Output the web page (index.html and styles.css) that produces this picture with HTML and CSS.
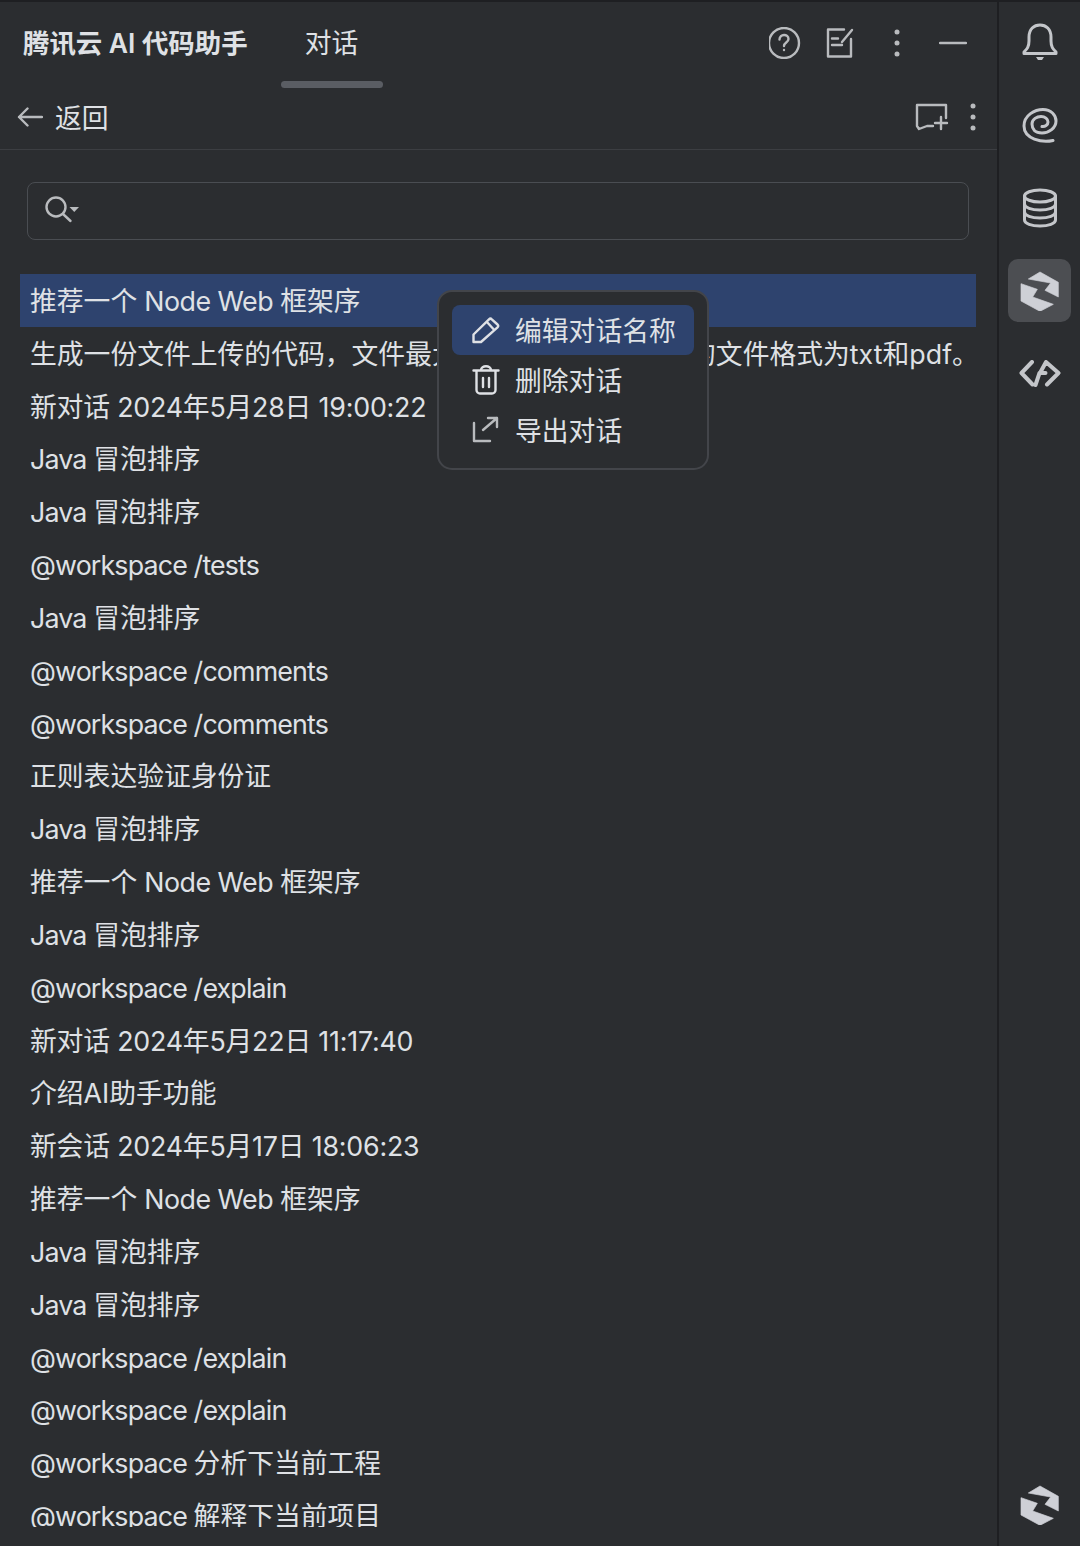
FILE: index.html
```html
<!DOCTYPE html>
<html lang="zh-CN">
<head>
    <meta charset="UTF-8">
    <title>腾讯云 AI 代码助手</title>
    <link rel="stylesheet" href="styles.css">
</head>
<body>
    <div class="window">
        <div class="panel">
            <header class="title-bar">
                <h1 class="title">腾讯云 AI 代码助手</h1>
                <div class="tab">对话</div>
                <div class="title-actions">
                    <span class="action">
                        <svg width="32" height="32" viewBox="0 0 32 32" class="line-icon"><circle cx="15" cy="16" r="15"/><path d="M10.500 12.500c0-6 9-6 9-.5 0 3.500-4.500 3.500-4.500 7"/><circle class="dot" cx="15" cy="23" r="1.200"/></svg>
                    </span>
                    <span class="action">
                        <svg width="32" height="32" viewBox="0 0 32 32" class="line-icon"><path d="M19 2.500H3v27h23V12"/><path d="M27 3 17 15M7 11.500h6M7 18h10"/></svg>
                    </span>
                    <span class="action">
                        <svg width="6" height="30" viewBox="0 0 6 30" class="fill-icon"><circle cx="3" cy="4" r="2.500"/><circle cx="3" cy="15" r="2.500"/><circle cx="3" cy="26" r="2.500"/></svg>
                    </span>
                    <span class="action">
                        <svg width="28" height="4" viewBox="0 0 28 4" class="line-icon"><path d="M1 2h26"/></svg>
                    </span>
                </div>
            </header>

            <div class="toolbar">
                <svg width="26" height="20" viewBox="0 0 26 20" class="line-icon back-icon"><path d="M25 10H2M10.500 1.500 2 10l8.500 8.500"/></svg>
                <span class="back-label">返回</span>
                <div class="toolbar-actions">
                    <svg width="34" height="28" viewBox="0 0 34 28" class="line-icon"><path d="M31 15V2H2v21l2 3 8-3h6M20 20h12M26 14v12"/></svg>
                    <svg width="6" height="30" viewBox="0 0 6 30" class="fill-icon menu-dots"><circle cx="3" cy="4" r="2.500"/><circle cx="3" cy="15" r="2.500"/><circle cx="3" cy="26" r="2.500"/></svg>
                </div>
            </div>

            <div class="search">
                <svg width="36" height="28" viewBox="0 0 36 28" class="line-icon"><circle cx="11" cy="11" r="9.500"/><path d="m18 18 7.500 7"/><path class="caret" d="M24.500 11H34l-4.750 5z"/></svg>
            </div>

            <ul class="history">
                <li class="selected">推荐一个<span class="en-mid"> Node Web </span>框架序</li>
                <li>生成一份文件上传的代码，文件最大不超过10MB，支持的文件格式为txt和pdf。</li>
                <li class="dated">新对话 2024年5月28日 19:00:22</li>
                <li><span class="en">Java </span>冒泡排序</li>
                <li><span class="en">Java </span>冒泡排序</li>
                <li><span class="en">@workspace /tests</span></li>
                <li><span class="en">Java </span>冒泡排序</li>
                <li><span class="en">@workspace /comments</span></li>
                <li><span class="en">@workspace /comments</span></li>
                <li>正则表达验证身份证</li>
                <li><span class="en">Java </span>冒泡排序</li>
                <li>推荐一个<span class="en-mid"> Node Web </span>框架序</li>
                <li><span class="en">Java </span>冒泡排序</li>
                <li><span class="en">@workspace /explain</span></li>
                <li class="dated">新对话 2024年5月22日 11:17:40</li>
                <li>介绍AI助手功能</li>
                <li class="dated">新会话 2024年5月17日 18:06:23</li>
                <li>推荐一个<span class="en-mid"> Node Web </span>框架序</li>
                <li><span class="en">Java </span>冒泡排序</li>
                <li><span class="en">Java </span>冒泡排序</li>
                <li><span class="en">@workspace /explain</span></li>
                <li><span class="en">@workspace /explain</span></li>
                <li><span class="en">@workspace </span>分析下当前工程</li>
                <li><span class="en">@workspace </span>解释下当前项目</li>
            </ul>

            <div class="context-menu">
                <div class="menu-item active">
                    <svg width="28" height="28" viewBox="0 0 28 28" class="menu-icon"><path d="M1.500 26v-7.500L17 3.300a2 2 0 0 1 2.800 0l5.700 5.200a2 2 0 0 1 0 2.800L9 26zM14.700 5.700l7.600 8.300"/></svg>
                    <span>编辑对话名称</span>
                </div>
                <div class="menu-item">
                    <svg width="28" height="30" viewBox="0 0 28 30" class="menu-icon"><path d="M1.500 5.500h25M9 5c0-5 10-5 10 0M4.500 6v19A3.500 3.500 0 0 0 8 28.500h12a3.500 3.500 0 0 0 3.500-3.500V6M11 13v9M17 13v9"/></svg>
                    <span>删除对话</span>
                </div>
                <div class="menu-item">
                    <svg width="28" height="28" viewBox="0 0 28 28" class="menu-icon faint"><path d="M2 7v18h16M11 14 25 2M16 2h9v9"/></svg>
                    <span>导出对话</span>
                </div>
            </div>
        </div>

        <aside class="sidebar">
            <div class="side-top">
                <span class="side-btn">
                    <svg width="36" height="38" viewBox="0 0 36 38" class="line-icon bell"><path d="M2 29c3-3 5-5 5-11v-4C7 6 12 2 18 2s11 4 11 12v4c0 6 2 8 5 11v1.500H2z"/><path class="dot" d="M14 34h8l-2 3h-4z"/></svg>
                </span>
                <span class="side-btn">
                    <svg width="36" height="36" viewBox="0 0 36 36" class="line-icon spiral"><path d="M31 33.500C20 36 2 32 2 19 2 8 13 2.500 21 2.500 29 2.500 34 8 34 14 34 21 27 26 20 26 13 26 10 22 10 17 10 12 15 9.500 19 9.500 23 9.500 26 12 26 15 26 18 23 20 20 19.500"/></svg>
                </span>
                <span class="side-btn">
                    <svg width="36" height="40" viewBox="0 0 36 40" class="line-icon db"><ellipse cx="18" cy="8" rx="15.500" ry="6"/><path d="M2.500 8v24c0 3.500 7 6 15.500 6s15.500-2.500 15.500-6V8M2.500 16c0 3.500 7 6 15.500 6s15.500-2.500 15.500-6M2.500 24c0 3.500 7 6 15.500 6s15.500-2.500 15.500-6"/></svg>
                </span>
                <span class="side-btn current">
                    <svg width="40" height="40" viewBox="0 0 120 120" class="logo"><path d="M25 24 60 3l55 31v44L75 58l17-22z"/><path d="m3 38 49 17-14 23 62 22-40 21L3 90z"/></svg>
                </span>
                <span class="side-btn">
                    <svg width="42" height="28" viewBox="0 0 42 28" class="line-icon code"><path d="M13 2 2.500 13 13.500 24.500M27 2l12.500 11L28 24.500M16.500 25l4-12h6M27 2l-6 11"/></svg>
                </span>
            </div>
            <span class="side-btn">
                <svg width="40" height="40" viewBox="0 0 120 120" class="logo"><path d="M25 24 60 3l55 31v44L75 58l17-22z"/><path d="m3 38 49 17-14 23 62 22-40 21L3 90z"/></svg>
            </span>
        </aside>
    </div>
</body>
</html>
```

FILE: styles.css
```css
/* page */
html, body {
    margin: 0;
    height: 100%;
    background: #2b2d30;
}

body {
    font-family: "Inter", "Noto Sans CJK SC", sans-serif;
    font-size: 26.800px;
    color: #dfe1e5;
}

svg {
    display: block;
}

.window {
    display: flex;
    height: 1546px;
    overflow: hidden;
    border-top: 2px solid #1e1f22;
    box-sizing: border-box;
}

.panel {
    position: relative;
    width: 997px;
    flex: none;
    border-right: 2px solid #1e1f22;
}

/* icons */
.line-icon {
    fill: none;
    stroke: #b9bbbe;
    stroke-width: 2.400;
    stroke-linecap: round;
    stroke-linejoin: round;
}

.line-icon .dot,
.line-icon .caret {
    fill: #b9bbbe;
    stroke: none;
}

.fill-icon {
    fill: #b9bbbe;
}

/* title row */
.title-bar {
    display: flex;
    align-items: flex-start;
    height: 86px;
    padding-left: 23px;
    padding-right: 16px;
}

.title {
    margin: 0;
    padding-top: 22px;
    font-size: 26.400px;
    font-weight: 600;
    line-height: 38px;
}

.tab {
    width: 102px;
    height: 86px;
    margin-left: 33px;
    padding-top: 22px;
    box-sizing: border-box;
    line-height: 38px;
    text-align: center;
}

.tab::after {
    content: "";
    display: block;
    height: 7px;
    margin-top: 19px;
    border-radius: 4px;
    background: #5a5d63;
}

.title-actions {
    display: flex;
    margin-left: auto;
    height: 82px;
}

.action {
    display: flex;
    align-items: center;
    justify-content: center;
    width: 56px;
}

/* back row */
.toolbar {
    display: flex;
    align-items: center;
    height: 62px;
    padding: 0 21px 4px 17px;
    box-sizing: border-box;
    border-bottom: 1px solid #3c3e42;
}

.back-label {
    margin-left: 12px;
}

.toolbar-actions {
    display: flex;
    align-items: center;
    gap: 21px;
    margin-left: auto;
}

/* search */
.search {
    display: flex;
    align-items: center;
    height: 58px;
    margin: 32px 28px 0 27px;
    padding: 0 0 2px 17px;
    box-sizing: border-box;
    border: 1.500px solid #4a4d52;
    border-radius: 8px;
}

/* history list */
.history {
    list-style: none;
    height: 1253px;
    margin: 34px 21px 0 20px;
    padding: 0;
    overflow: hidden;
}

.history li {
    height: 52.830px;
    padding: 1px 0 0 10px;
    box-sizing: border-box;
    line-height: 52.830px;
    white-space: nowrap;
}

.history .selected {
    background: #2e436e;
}

.history .dated {
    letter-spacing: -0.200px;
}

.en {
    letter-spacing: -0.850px;
}

.en-mid {
    letter-spacing: -0.500px;
}

/* popup menu */
.context-menu {
    position: absolute;
    left: 437px;
    top: 288px;
    width: 272px;
    height: 180px;
    padding: 13px;
    box-sizing: border-box;
    background: #2b2d30;
    border: 2px solid #43454a;
    border-radius: 15px;
}

.menu-item {
    display: flex;
    align-items: center;
    gap: 15px;
    height: 50px;
    padding-left: 20px;
    border-radius: 8px;
}

.menu-item span {
    padding-bottom: 2px;
}

.menu-item.active {
    background: #2e436e;
}

.menu-icon {
    fill: none;
    stroke: #dfe1e5;
    stroke-width: 2.400;
    stroke-linejoin: round;
    stroke-linecap: round;
}

.menu-icon.faint {
    stroke: #b9bbbe;
}

/* right stripe */
.sidebar {
    flex: 1;
    display: flex;
    flex-direction: column;
    align-items: center;
    justify-content: space-between;
}

.sidebar .line-icon {
    stroke: #c4c6ca;
    stroke-width: 3;
}

.sidebar .line-icon .dot {
    fill: #c4c6ca;
    stroke: none;
}

.side-top {
    display: flex;
    flex-direction: column;
    align-items: center;
    margin-top: -2px;
}

.side-btn {
    display: flex;
    align-items: center;
    justify-content: center;
    width: 63px;
    height: 83px;
}

.side-btn.current {
    height: 63px;
    margin: 10px 0;
    background: #4c4e52;
    border-radius: 10px;
}

.logo {
    fill: #ced0d6;
    stroke: #ced0d6;
    stroke-width: 2;
    stroke-linejoin: round;
}

.sidebar .code {
    stroke-width: 4;
}
```
